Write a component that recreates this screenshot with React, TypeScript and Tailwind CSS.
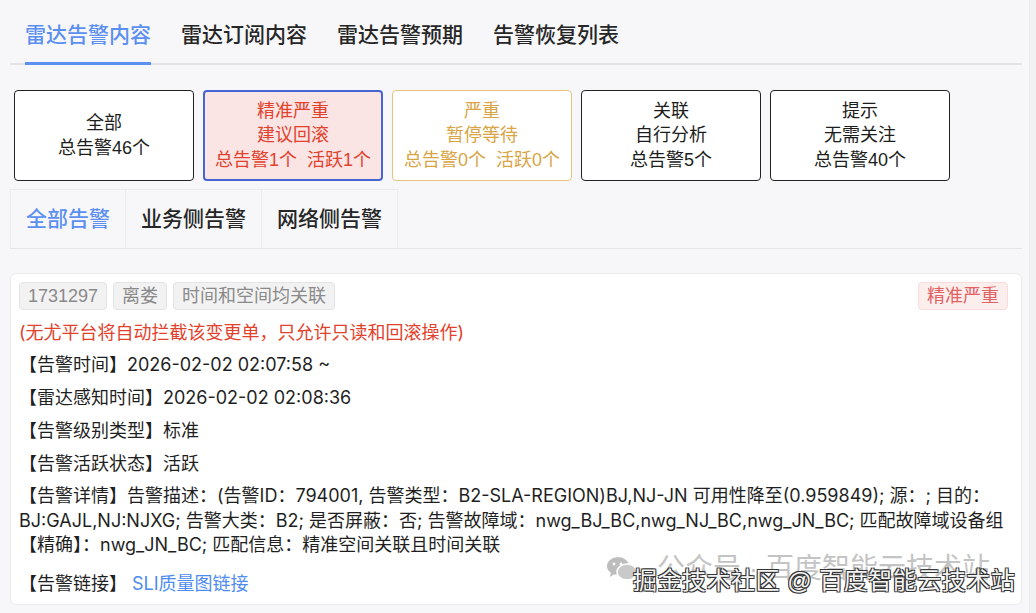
import React from 'react';

const topTabs = ['雷达告警内容', '雷达订阅内容', '雷达告警预期', '告警恢复列表'];
const subTabs = ['全部告警', '业务侧告警', '网络侧告警'];

type Card = { lines: string[]; tone: 'plain' | 'danger' | 'warn' };

const cards: Card[] = [
  { lines: ['全部', '总告警46个'], tone: 'plain' },
  { lines: ['精准严重', '建议回滚', '总告警1个  活跃1个'], tone: 'danger' },
  { lines: ['严重', '暂停等待', '总告警0个  活跃0个'], tone: 'warn' },
  { lines: ['关联', '自行分析', '总告警5个'], tone: 'plain' },
  { lines: ['提示', '无需关注', '总告警40个'], tone: 'plain' },
];

const toneClass = {
  plain: 'bg-white border border-[#222] text-[#1d1d1d]',
  danger: 'bg-[#fbe4e4] border-2 border-[#4565d3] text-[#e2412c]',
  warn: 'bg-white border border-[#e6c47c] text-[#d8a444]',
};

function WeChatIcon() {
  return (
    <svg width="30" height="26" viewBox="0 0 30 26" fill="#bdbdbd">
      <ellipse cx="11" cy="10" rx="11" ry="9" />
      <path d="M4 16 L3 21 L9 17 Z" />
      <ellipse cx="20" cy="16" rx="10" ry="8" fill="#c9c9c9" stroke="#fff" strokeWidth="1.5" />
      <circle cx="7" cy="8" r="1.4" fill="#fff" />
      <circle cx="14" cy="8" r="1.4" fill="#fff" />
    </svg>
  );
}

export default function App() {
  return (
    <div className="relative w-[1036px] h-[613px] overflow-hidden bg-[#f7f7fa] font-['Liberation_Sans','Noto_Sans_CJK_SC',sans-serif] text-[#1f1f1f]">
      <div className="absolute right-0 top-0 h-full w-[7px] bg-[#f1f1f4] border-l border-[#e9e9ee]" />
      <div className="w-[1012px] ml-[10px]">
        {/* Top tabs */}
        <div className="flex gap-[30px] pl-[15px] border-b-2 border-[#e3e3e8]">
          {topTabs.map((t, i) => (
            <div
              key={t}
              className={`pt-[20px] pb-[12px] text-[21px] leading-[30px] font-medium -mb-[2px] border-b-[3px] ${i === 0 ? 'text-[#5b8ff0] border-[#5b8ff0]' : 'text-[#262626] border-transparent'}`}
            >
              {t}
            </div>
          ))}
        </div>

        {/* Filter cards */}
        <div className="flex gap-[9px] mt-[25px] ml-[4px]">
          {cards.map((c, i) => (
            <div
              key={i}
              className={`w-[180px] h-[91px] rounded-[4px] flex flex-col items-center justify-center text-[18px] leading-[24.5px] whitespace-pre ${toneClass[c.tone]}`}
            >
              {c.lines.map(l => <div key={l}>{l}</div>)}
            </div>
          ))}
        </div>

        {/* Sub tabs */}
        <div className="mt-[8px] border-b border-[#e6e6ea]">
          <div className="inline-flex border border-b-0 border-[#ebebef]">
            {subTabs.map((t, i) => (
              <div
                key={t}
                className={`h-[58px] px-[15px] flex items-center text-[21px] font-medium ${i > 0 ? 'border-l border-[#ebebef]' : ''} ${i === 0 ? 'text-[#5b8ff0]' : 'text-[#262626]'}`}
              >
                {t}
              </div>
            ))}
          </div>
        </div>

        {/* Alert card */}
        <div className="mt-[24px] bg-white border border-[#ececf0] rounded-[6px] px-[8px] pt-[8px] pb-[8px] text-[18px]">
          <div className="flex items-start justify-between">
            <div className="flex gap-[6px]">
              {['1731297', '离娄', '时间和空间均关联'].map(t => (
                <span key={t} className="h-[28px] px-[8px] flex items-center bg-[#f2f2f3] border border-[#e4e4e7] rounded-[4px] text-[#8a8a8a]">
                  {t}
                </span>
              ))}
            </div>
            <span className="mr-[5px] h-[28px] px-[8px] flex items-center bg-[#fdeeee] border border-[#f8dcdc] rounded-[4px] text-[#e26262]">
              精准严重
            </span>
          </div>

          <div className="font-['Inter','Noto_Sans_CJK_SC',sans-serif]">
            <div className="mt-[10px] leading-[25px] text-[#e2412c]">(无尤平台将自动拦截该变更单，只允许只读和回滚操作)</div>
            <div className="mt-[7px] leading-[25px]">【告警时间】2026-02-02 02:07:58 ~</div>
            <div className="mt-[8px] leading-[25px]">【雷达感知时间】2026-02-02 02:08:36</div>
            <div className="mt-[8px] leading-[25px]">【告警级别类型】标准</div>
            <div className="mt-[8px] leading-[25px]">【告警活跃状态】活跃</div>
            <div className="mt-[8px] leading-[24.5px] whitespace-nowrap">
              <div>【告警详情】告警描述：(告警ID：794001, 告警类型：B2-SLA-REGION)BJ,NJ-JN 可用性降至(0.959849); 源：; 目的：</div>
              <div>BJ:GAJL,NJ:NJXG; 告警大类：B2; 是否屏蔽：否; 告警故障域：nwg_BJ_BC,nwg_NJ_BC,nwg_JN_BC; 匹配故障域设备组</div>
              <div>【精确】：nwg_JN_BC; 匹配信息：精准空间关联且时间关联</div>
            </div>
            <div className="mt-[13px] leading-[25px]">
              【告警链接】 <span className="text-[#4e8cf0]">SLI质量图链接</span>
            </div>
          </div>
        </div>
      </div>

      {/* Watermark */}
      <div className="absolute left-[607px] top-[553px] flex items-center gap-[20px] text-[28px] leading-[32px] text-[#c4c4c4] whitespace-nowrap pointer-events-none">
        <WeChatIcon />
        <span>公众号 · 百度智能云技术站</span>
      </div>
      <div className="absolute left-[633px] top-[567px] text-[24px] leading-[28px] tracking-[0.5px] text-[#f4f4f4] whitespace-nowrap pointer-events-none [text-shadow:1px_1px_0_#333,-1px_-1px_0_#333,1px_-1px_0_#333,-1px_1px_0_#333]">
        掘金技术社区 @ 百度智能云技术站
      </div>
    </div>
  );
}
